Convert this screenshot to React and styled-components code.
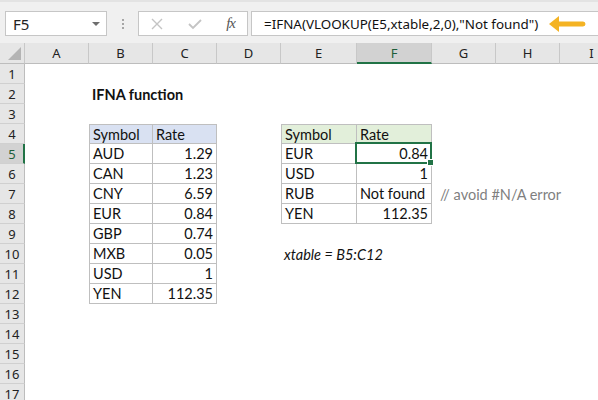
import React from 'react';
import styled, { createGlobalStyle } from 'styled-components';

const GlobalStyle = createGlobalStyle`
  html, body {
    margin: 0;
    padding: 0;
    background: #fff;
    overflow: hidden;
  }
  body {
    width: 598px;
    height: 400px;
  }
`;

const Page = styled.div`
  width: 598px;
  height: 400px;
  overflow: hidden;
  background: #fff;
`;

const Toolbar = styled.div`
  display: flex;
  align-items: flex-start;
  height: 43px;
  box-sizing: border-box;
  padding: 9px 0 0 5px;
  background: #f0f0f0;
  border-top: 2px solid #e3e3e3;
`;

const NameBox = styled.div`
  display: flex;
  align-items: center;
  justify-content: space-between;
  box-sizing: border-box;
  width: 102px;
  height: 25px;
  padding: 0 6px 0 7px;
  background: #fff;
  border: 1px solid #c6c6c6;
  font: 15px 'Noto Sans', 'Open Sans', sans-serif;
  color: #222;
`;

const Caret = styled.span`
  width: 0;
  height: 0;
  border-left: 4px solid transparent;
  border-right: 4px solid transparent;
  border-top: 4px solid #6e6e6e;
`;

const Grip = styled.div`
  display: flex;
  flex-direction: column;
  gap: 2px;
  margin: 8px 14px 0 15px;

  span {
    width: 2px;
    height: 2px;
    background: #a6a6a6;
  }
`;

const FxBox = styled.div`
  display: flex;
  align-items: center;
  justify-content: space-between;
  box-sizing: border-box;
  width: 110px;
  height: 25px;
  padding: 0 12px 0 12px;
  background: #fff;
  border: 1px solid #c6c6c6;
`;

const FxText = styled.span`
  font: italic 15px 'Liberation Serif', 'DejaVu Serif', serif;
  color: #555;
  letter-spacing: -1px;
`;

const FormulaBox = styled.div`
  flex: 1;
  display: flex;
  align-items: center;
  box-sizing: border-box;
  height: 25px;
  margin-left: 3px;
  padding-left: 12px;
  background: #fff;
  border: 1px solid #c6c6c6;
  border-right: none;
  font: 13.4px 'Noto Sans', 'Open Sans', sans-serif;
  color: #111;
  white-space: nowrap;
`;

const Arrow = styled.svg`
  margin-left: 11px;
  flex: none;
`;

const Sheet = styled.div`
  display: grid;
  grid-template-columns: 25px 64px 64px 64px 64px 76px 75px 64px 64px 64px;
  grid-template-rows: 21px;
  grid-auto-rows: 20px;
  font-family: Lato, 'Liberation Sans', sans-serif;
  font-size: 14.5px;
  color: #111;
`;

const Corner = styled.div`
  position: relative;
  background: #e6e6e6;
  border-right: 1px solid #c8c8c8;
  border-bottom: 1px solid #bdbdbd;
  box-sizing: border-box;

  &::after {
    content: '';
    position: absolute;
    right: 3px;
    bottom: 3px;
    width: 0;
    height: 0;
    border-left: 13px solid transparent;
    border-bottom: 13px solid #b4b4b4;
  }
`;

const ColHead = styled.div`
  display: flex;
  align-items: center;
  justify-content: center;
  box-sizing: border-box;
  background: ${(p) => (p.$sel ? '#d2d2d2' : '#e6e6e6')};
  border-right: 1px solid #c8c8c8;
  border-bottom: ${(p) => (p.$sel ? '2px solid #217346' : '1px solid #bdbdbd')};
  font: 13px 'Noto Sans', 'Open Sans', sans-serif;
  color: ${(p) => (p.$sel ? '#1e5e3a' : '#222')};
  padding-top: ${(p) => (p.$sel ? '1px' : '0')};
`;

const RowHead = styled.div`
  display: flex;
  align-items: center;
  justify-content: center;
  box-sizing: border-box;
  background: ${(p) => (p.$sel ? '#d2d2d2' : '#e6e6e6')};
  border-right: ${(p) => (p.$sel ? '2px solid #217346' : '1px solid #bdbdbd')};
  border-bottom: 1px solid #d0d0d0;
  font: 13px 'Noto Sans', 'Open Sans', sans-serif;
  color: ${(p) => (p.$sel ? '#1e5e3a' : '#222')};
  padding-left: ${(p) => (p.$sel ? '1px' : '0')};
`;

const Cell = styled.div`
  position: relative;
  display: flex;
  align-items: center;
  justify-content: ${(p) => (p.$right ? 'flex-end' : 'flex-start')};
  box-sizing: border-box;
  padding: 0 3px 0 ${(p) => p.$indent || 3}px;
  white-space: nowrap;
  overflow: visible;
  background: ${(p) => p.$fill || 'transparent'};
  font-weight: ${(p) => (p.$bold ? 700 : 400)};
  font-style: ${(p) => (p.$italic ? 'italic' : 'normal')};
  color: ${(p) => p.$color || '#111'};
  border-right: ${(p) => (p.$box ? '1px solid #bfbfbf' : 'none')};
  border-bottom: ${(p) => (p.$box ? '1px solid #bfbfbf' : 'none')};
  border-top: ${(p) => (p.$top ? '1px solid #bfbfbf' : 'none')};
  border-left: ${(p) => (p.$left ? '1px solid #bfbfbf' : 'none')};
  z-index: ${(p) => (p.$sel ? 2 : 1)};
`;

const Selection = styled.div`
  position: absolute;
  top: -2px;
  left: -2px;
  right: -1px;
  bottom: -1px;
  border: 2px solid #217346;
  pointer-events: none;

  &::after {
    content: '';
    position: absolute;
    right: -4px;
    bottom: -4px;
    width: 5px;
    height: 5px;
    background: #217346;
    border: 1px solid #fff;
  }
`;

const letters = ['A', 'B', 'C', 'D', 'E', 'F', 'G', 'H', 'I'];

const blue = '#d9e1f2';
const green = '#e2efda';

const tableOne = [
  ['AUD', '1.29'],
  ['CAN', '1.23'],
  ['CNY', '6.59'],
  ['EUR', '0.84'],
  ['GBP', '0.74'],
  ['MXB', '0.05'],
  ['USD', '1'],
  ['YEN', '112.35'],
];

const tableTwo = [
  ['EUR', '0.84'],
  ['USD', '1'],
  ['RUB', 'Not found', true],
  ['YEN', '112.35'],
];

const cells = {
  B2: { text: 'IFNA function', $bold: true },
  B4: { text: 'Symbol', $box: true, $top: true, $left: true, $fill: blue },
  C4: { text: 'Rate', $box: true, $top: true, $fill: blue },
  E4: { text: 'Symbol', $box: true, $top: true, $left: true, $fill: green },
  F4: { text: 'Rate', $box: true, $top: true, $fill: green },
  G7: { text: '// avoid #N/A error', $color: '#7f7f7f', $indent: 8 },
  E10: { text: 'xtable = B5:C12', $italic: true },
};

tableOne.forEach(([sym, rate], i) => {
  cells[`B${i + 5}`] = { text: sym, $box: true, $left: true };
  cells[`C${i + 5}`] = { text: rate, $box: true, $right: true };
});

tableTwo.forEach(([sym, rate, left], i) => {
  cells[`E${i + 5}`] = { text: sym, $box: true, $left: true };
  cells[`F${i + 5}`] = { text: rate, $box: true, $right: !left };
});

const selected = 'F5';

const FormulaArrow = () => (
  <Arrow width="37" height="18" viewBox="0 0 37 18">
    <path d="M0 9 L10 1 L10 6.5 L34 6.5 A2.5 2.5 0 0 1 34 11.5 L10 11.5 L10 17 Z" fill="#f4b323" />
  </Arrow>
);

const App = () => {
  const rows = Array.from({ length: 17 }, (_, i) => i + 1);

  return (
    <Page>
      <GlobalStyle />
      <Toolbar>
        <NameBox>
          F5
          <Caret />
        </NameBox>
        <Grip>
          <span />
          <span />
          <span />
        </Grip>
        <FxBox>
          <svg width="12" height="12" viewBox="0 0 12 12">
            <path d="M1 1 L11 11 M11 1 L1 11" stroke="#c4c4c4" strokeWidth="1.4" />
          </svg>
          <svg width="14" height="12" viewBox="0 0 14 12">
            <path d="M1 6 L5 10 L13 2" stroke="#c4c4c4" strokeWidth="1.8" fill="none" />
          </svg>
          <FxText>fx</FxText>
        </FxBox>
        <FormulaBox>
          =IFNA(VLOOKUP(E5,xtable,2,0),"Not found")
          <FormulaArrow />
        </FormulaBox>
      </Toolbar>
      <Sheet>
        <Corner />
        {letters.map((l) => (
          <ColHead key={l} $sel={l === selected[0]}>
            {l}
          </ColHead>
        ))}
        {rows.map((r) => (
          <React.Fragment key={r}>
            <RowHead $sel={`${r}` === selected.slice(1)}>{r}</RowHead>
            {letters.map((l) => {
              const ref = `${l}${r}`;
              const { text, ...props } = cells[ref] || {};
              const isSel = ref === selected;
              return (
                <Cell key={ref} {...props} $sel={isSel}>
                  {text}
                  {isSel && <Selection />}
                </Cell>
              );
            })}
          </React.Fragment>
        ))}
      </Sheet>
    </Page>
  );
};

export default App;
